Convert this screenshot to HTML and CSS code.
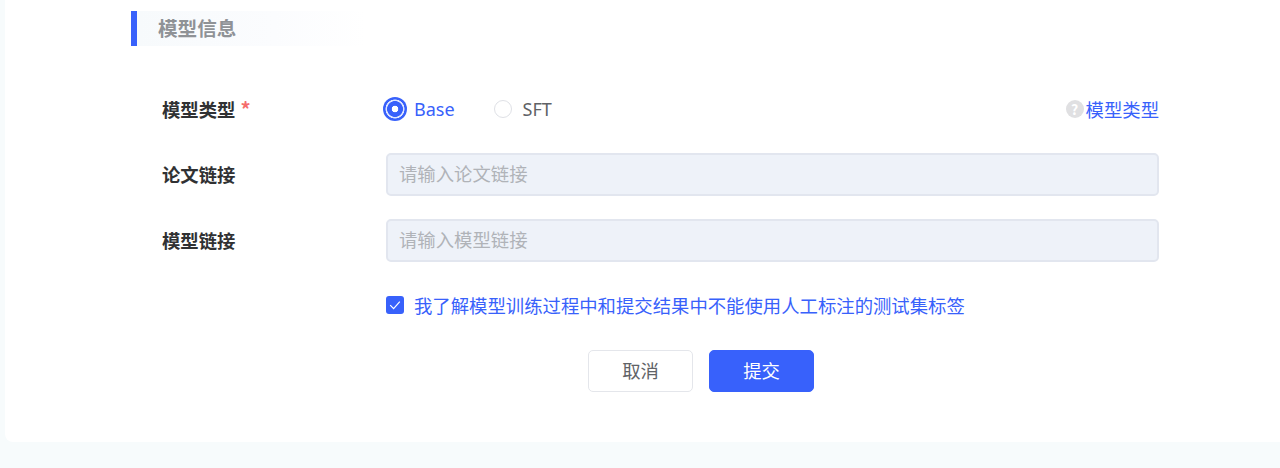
FILE: index.html
```html
<!DOCTYPE html>
<html>
<head>
	<title>模型信息</title>
	<link rel="stylesheet" href="styles.css">
</head>
<body>
	<div class="card">
		<h2 class="section-title"><span>模型信息</span></h2>
		<form class="model-form">
			<div class="row row-radio">
				<label class="row-label">模型类型<i class="star">*</i></label>
				<div class="row-body radios">
					<span class="radio active"><i class="dot"></i>Base</span>
					<span class="radio"><i class="dot"></i>SFT</span>
					<a class="help"><i class="help-icon">?</i>模型类型</a>
				</div>
			</div>
			<div class="row">
				<label class="row-label">论文链接</label>
				<div class="row-body"><input class="txt" type="text" placeholder="请输入论文链接"></div>
			</div>
			<div class="row">
				<label class="row-label">模型链接</label>
				<div class="row-body"><input class="txt" type="text" placeholder="请输入模型链接"></div>
			</div>
			<div class="row row-check">
				<div class="row-body agree">
					<i class="check">
						<svg width="14" height="14" viewBox="0 0 14 14"><path d="M2.2 7.2 5.6 10.6 11.8 3.6" fill="none" stroke="#fff" stroke-width="1.2"/></svg>
					</i>
					<span>我了解模型训练过程中和提交结果中不能使用人工标注的测试集标签</span>
				</div>
			</div>
			<div class="btns">
				<button class="btn" type="button">取消</button>
				<button class="btn primary" type="button">提交</button>
			</div>
		</form>
	</div>
</body>
</html>
```
FILE: styles.css
```css
body{
	margin:0;
	height:468px;
	overflow:hidden;
	background-color:#f7fbfc;
	font-family:"Noto Sans CJK SC","Liberation Sans",sans-serif;
	font-size:18.36px;
}
.card{
	margin-left:5px;
	height:442px;
	box-sizing:border-box;
	padding:11px 0 0 126px;
	background-color:#fff;
	border-radius:0 0 0 8px;
}
.section-title{
	margin:0;
	width:235px;
	height:35px;
	box-sizing:border-box;
	padding-left:21px;
	border-left:6px solid #3861fb;
	background:linear-gradient(90deg,#f7fafc,#fbfcfe 60%,#fff);
	font-size:19.6px;
	line-height:33px;
	color:#8f9296;
}
.model-form{
	width:997px;
	margin:0 0 0 31px;
	padding-top:43px;
}
.row{
	display:flex;
	align-items:center;
	margin-bottom:23px;
}
.row-radio{
	height:40px;
	margin-bottom:24px;
}
.row-check{
	height:20px;
	margin-top:34px;
	margin-bottom:34px;
}
.row-label{
	display:flex;
	width:224px;
	flex-shrink:0;
	padding-bottom:1px;
	font-weight:700;
	color:#303133;
}
.star{
	margin-left:5px;
	font-style:normal;
	font-weight:700;
	font-size:20px;
	line-height:26px;
	color:#f56c6c;
}
.row-body{
	flex:1;
}
.row-check .row-body{
	margin-left:224px;
}
.radios{
	display:flex;
	align-items:center;
}
.radio{
	display:flex;
	align-items:center;
	margin-right:39px;
	color:#606266;
	font-family:"Noto Sans","Liberation Sans",sans-serif;
	font-size:18px;
}
.radio .dot{
	width:18px;
	height:18px;
	margin-right:11px;
	box-sizing:border-box;
	border:1px solid #dfe1e6;
	border-radius:50%;
	background-color:#fff;
}
.radio.active{
	color:#3861fb;
}
.radio.active .dot{
	margin-left:-3px;
	margin-right:7px;
	width:24px;
	height:24px;
	border:none;
	background:radial-gradient(circle,#fff 0 3px,#3861fb 3.6px 7.6px,#dfe6ff 8.2px 9.2px,#3861fb 9.8px 12px);
}
.help{
	margin-left:auto;
	display:flex;
	align-items:center;
	color:#3861fb;
}
.help-icon{
	width:18px;
	height:18px;
	margin-right:2px;
	border-radius:50%;
	background-color:#e0e0e2;
	color:#fff;
	font-style:normal;
	font-weight:700;
	font-size:14px;
	line-height:18px;
	text-align:center;
}
.agree{
	display:flex;
	align-items:center;
	padding-bottom:2px;
	color:#3861fb;
}
.txt{
	display:block;
	width:100%;
	height:43px;
	box-sizing:border-box;
	padding:0 11px 4px 11px;
	border:2px solid #e2e6ef;
	border-radius:5px;
	background-color:#eef2f9;
	font-family:inherit;
	font-size:18.36px;
	outline:none;
}
.txt::placeholder{
	color:#b0b3b8;
}
.check{
	display:flex;
	align-items:center;
	justify-content:center;
	width:18px;
	height:18px;
	margin-right:10px;
	border-radius:3px;
	background-color:#3861fb;
}
.btns{
	display:flex;
	justify-content:center;
	gap:16px;
	padding-left:81px;
}
.btn{
	width:105px;
	height:42px;
	box-sizing:border-box;
	border:1px solid #e4e6eb;
	border-radius:5px;
	background-color:#fff;
	color:#606266;
	font-family:inherit;
	font-size:18.36px;
	padding:0 0 3px;
}
.btn.primary{
	border-color:#3861fb;
	background-color:#3861fb;
	color:#fff;
}
```
